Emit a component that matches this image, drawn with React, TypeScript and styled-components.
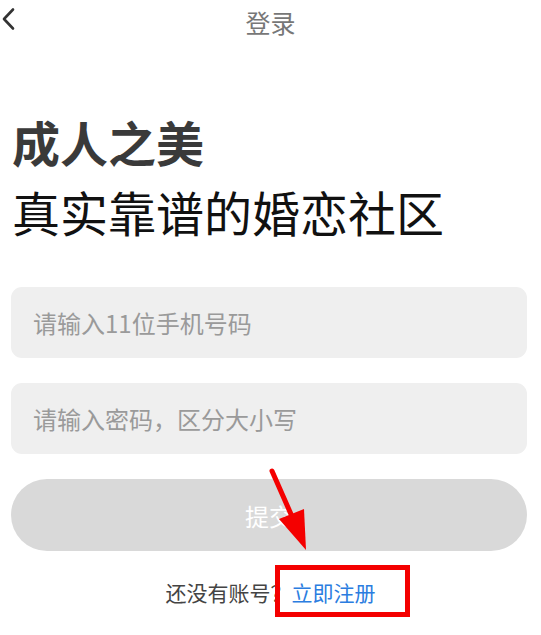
import styled, { createGlobalStyle } from 'styled-components';

const GlobalStyle = createGlobalStyle`
    body {
        margin: 0;
        background: #ffffff;
        font-family: "Noto Sans CJK SC", "Noto Sans", sans-serif;
    }
`

const Page = styled.div`
    width: 541px;
    height: 635px;
    overflow: hidden;
    position: relative;
`
const Header = styled.div`
    height: 45px;
    display: flex;
    align-items: center;
    justify-content: center;
    position: relative;
`
const BackButton = styled.button`
    position: absolute;
    left: 0;
    top: 5px;
    width: 18px;
    height: 28px;
    padding: 0;
    border: none;
    background: none;
    display: flex;
    align-items: center;
    justify-content: center;
`
const HeaderTitle = styled.h1`
    margin: 0;
    font-size: 25px;
    font-weight: 400;
    color: #777777;
    line-height: 45px;
`
const Slogan = styled.div`
    margin-top: 61px;
    padding-left: 12px;
`
const SloganLine = styled.div<{ $bold?: boolean }>`
    font-size: 48px;
    line-height: 70px;
    font-weight: ${p => (p.$bold ? 700 : 400)};
    color: ${p => (p.$bold ? '#3a3a3a' : '#111111')};
`
const Form = styled.form`
    margin-top: 41px;
    padding: 0 14px 0 11px;
    display: flex;
    flex-direction: column;
    gap: 25px;
`
const Field = styled.input`
    height: 71px;
    box-sizing: border-box;
    border: none;
    border-radius: 11px;
    background: #efefef;
    padding: 0 22px;
    font-family: inherit;
    font-size: 24px;
    color: #333333;
    outline: none;
    &::placeholder {
        color: #9a9a9a;
    }
`
const ButtonWrap = styled.div`
    position: relative;
    display: flex;
    flex-direction: column;
`
const SubmitButton = styled.button`
    height: 72px;
    border: none;
    border-radius: 36px;
    background: #d9d9d9;
    color: #ffffff;
    font-family: inherit;
    font-size: 24px;
`
const Footer = styled.div`
    margin-top: 26px;
    display: flex;
    justify-content: center;
    font-size: 21px;
    line-height: 30px;
    color: #444444;
`
const RegisterLink = styled.a`
    color: #2b7de0;
    text-decoration: none;
    position: relative;
`
const Highlight = styled.span`
    position: absolute;
    left: -17px;
    top: -12px;
    width: 135px;
    height: 52px;
    box-sizing: border-box;
    border: 5px solid #f40000;
`
const Arrow = styled.svg`
    position: absolute;
    left: 233px;
    top: -20px;
    pointer-events: none;
`

const App = () => {
    return (
        <Page>
            <GlobalStyle />
            <Header>
                <BackButton type="button" aria-label="back">
                    <svg width="16" height="24" viewBox="0 0 16 24">
                        <polyline points="12,2.5 3,12 12,21.5" fill="none" stroke="#333" strokeWidth="2.6" strokeLinecap="round" strokeLinejoin="round" />
                    </svg>
                </BackButton>
                <HeaderTitle>登录</HeaderTitle>
            </Header>
            <Slogan>
                <SloganLine $bold>成人之美</SloganLine>
                <SloganLine>真实靠谱的婚恋社区</SloganLine>
            </Slogan>
            <Form onSubmit={e => e.preventDefault()}>
                <Field type="tel" placeholder="请输入11位手机号码" />
                <Field type="password" placeholder="请输入密码，区分大小写" />
                <ButtonWrap>
                    <SubmitButton type="submit">提交</SubmitButton>
                    <Arrow width="72" height="100" viewBox="0 0 72 100">
                        <line x1="28" y1="12" x2="50" y2="62" stroke="#f40000" strokeWidth="5" strokeLinecap="round" />
                        <polygon points="35,60 60,50 62,91" fill="#f40000" />
                    </Arrow>
                </ButtonWrap>
            </Form>
            <Footer>
                还没有账号？
                <RegisterLink href="#">
                    立即注册
                    <Highlight />
                </RegisterLink>
            </Footer>
        </Page>
    )
}

export default App;
